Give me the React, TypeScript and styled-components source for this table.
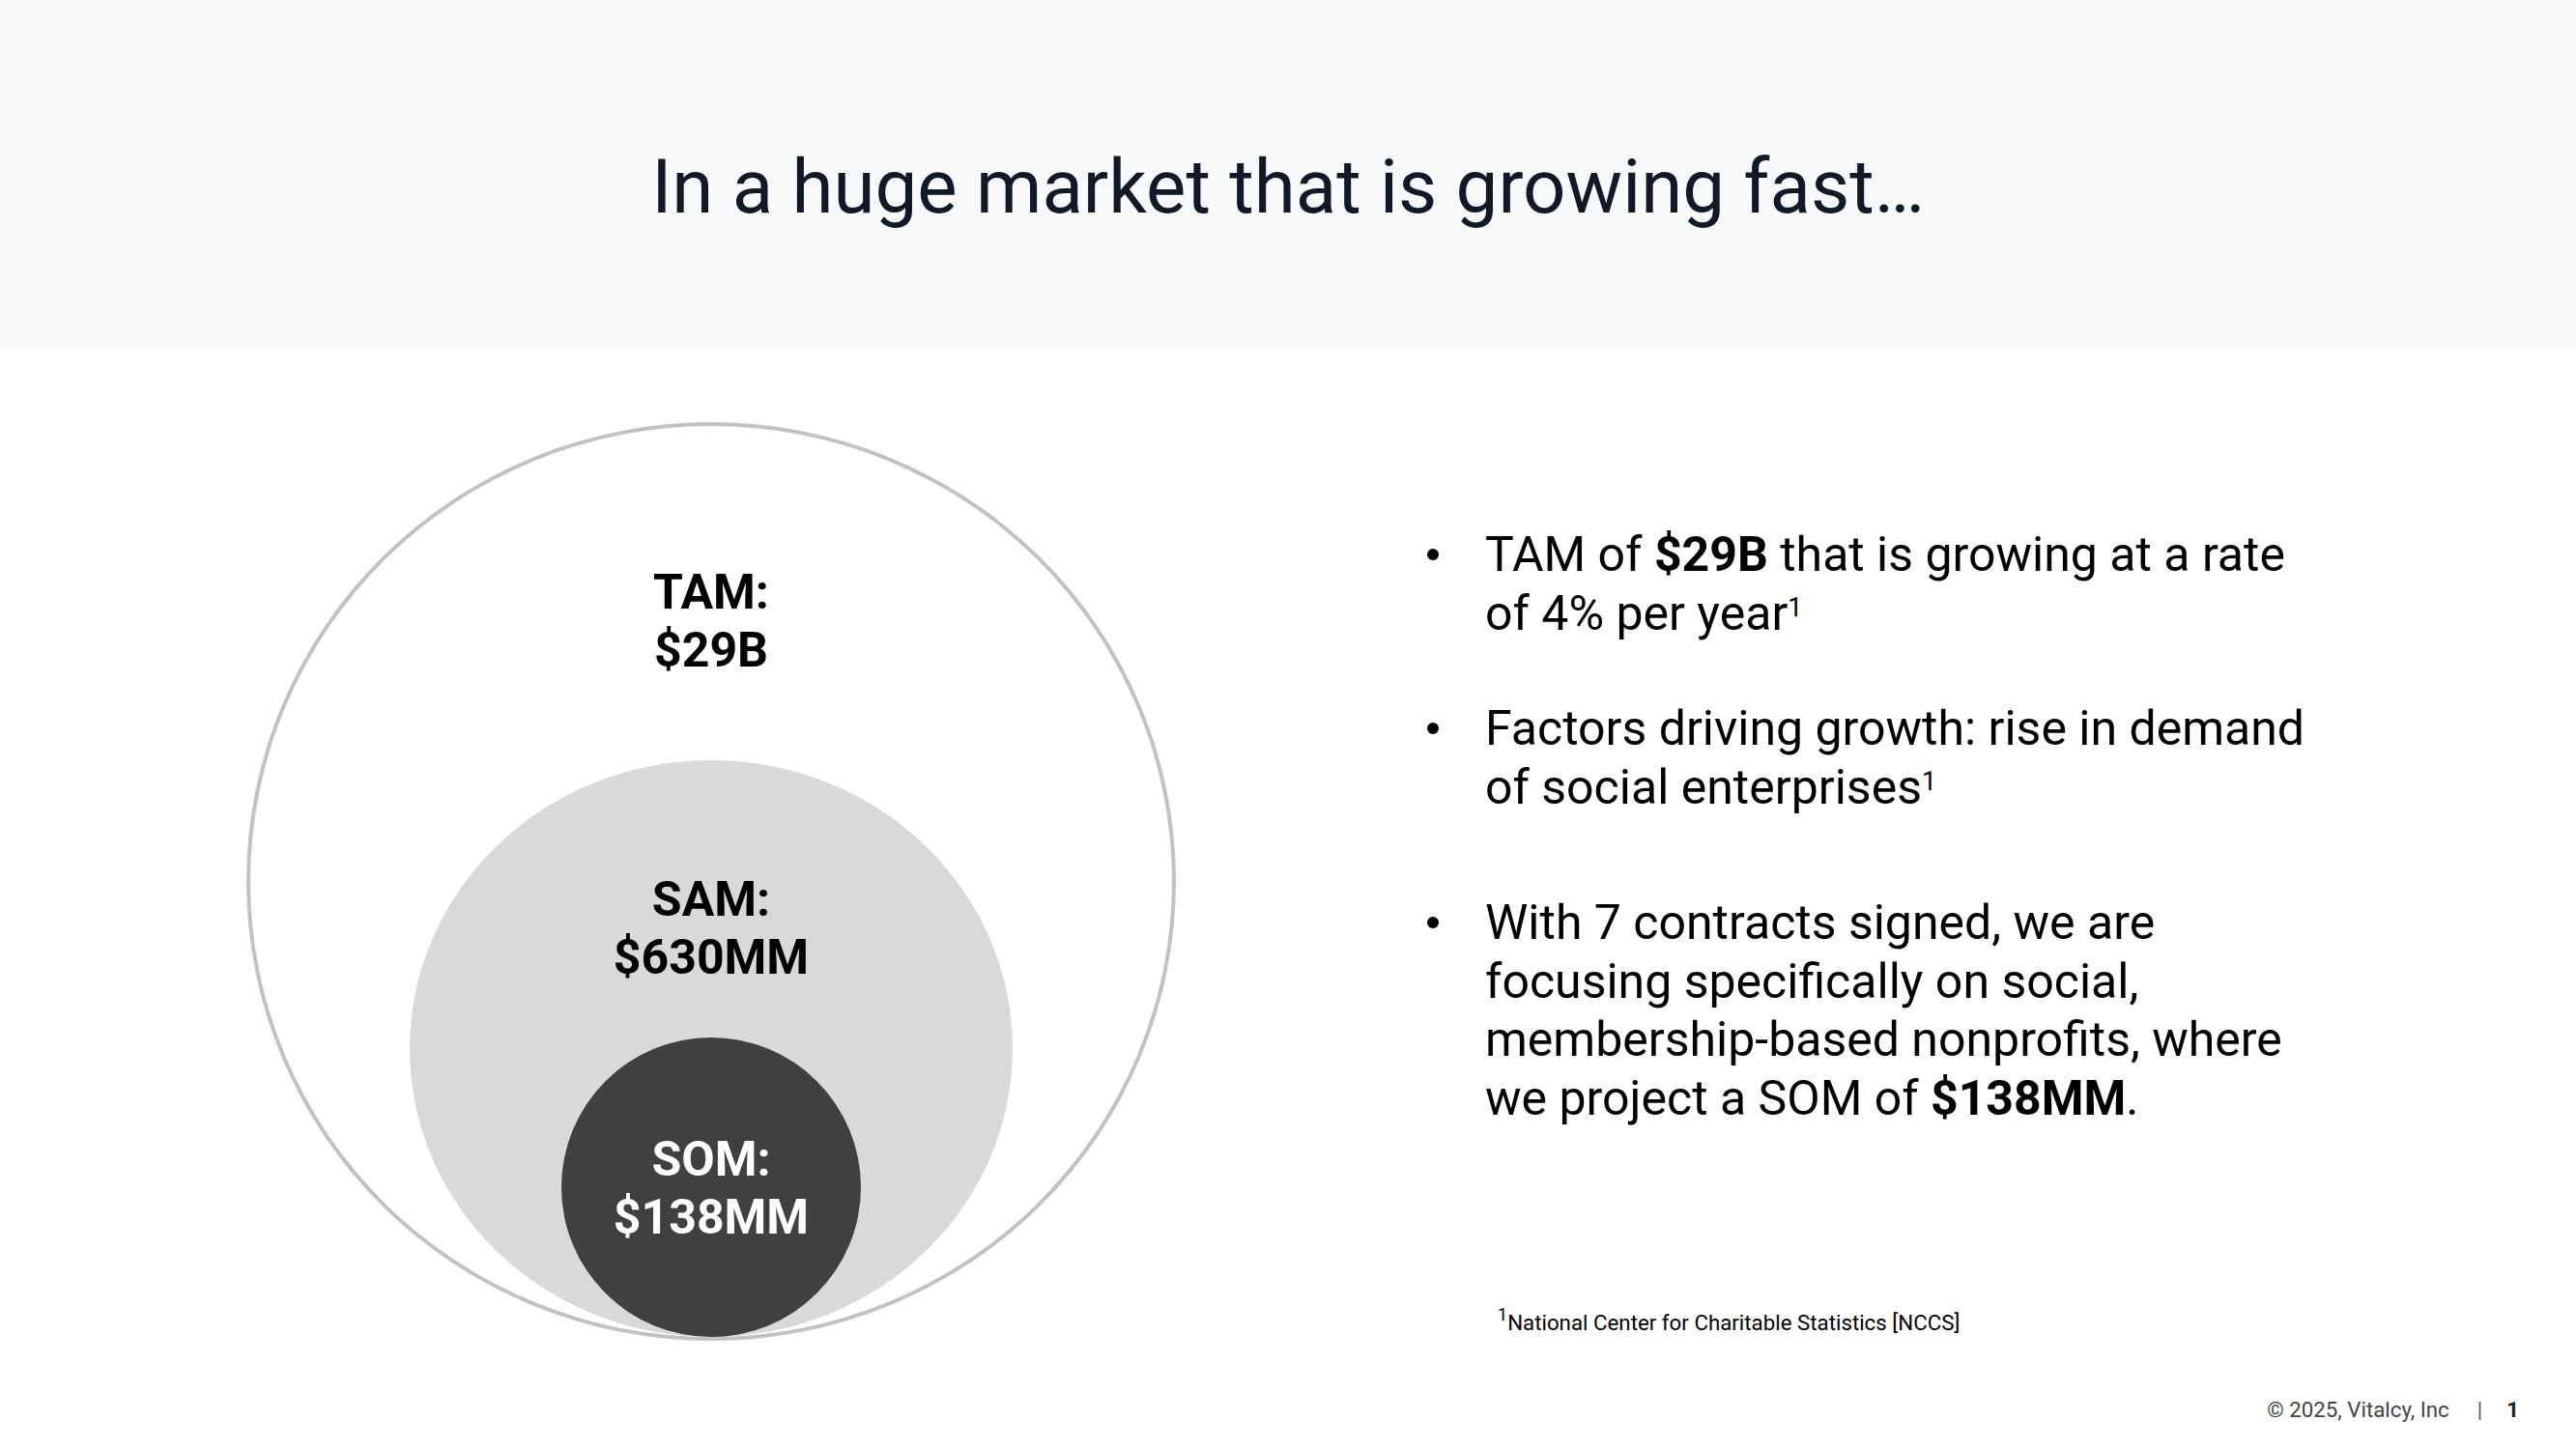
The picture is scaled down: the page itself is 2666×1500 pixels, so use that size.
import React from "react";
import styled, { createGlobalStyle } from "styled-components";

const GlobalStyle = createGlobalStyle`
  html, body { margin: 0; padding: 0; background: #ffffff; }
  body {
    font-family: Roboto, "Noto Sans", "Liberation Sans", sans-serif;
    -webkit-font-smoothing: antialiased;
  }
  * { box-sizing: border-box; }
`;

const Slide = styled.div`
  width: 2666px;
  height: 1500px;
  display: flex;
  flex-direction: column;
  background: #ffffff;
  overflow: hidden;
`;

const Header = styled.header`
  height: 362px;
  flex-shrink: 0;
  background: #f8f9fb;
  display: flex;
  justify-content: center;
  padding-top: 155px;
`;

const Title = styled.h1`
  margin: 0;
  font-size: 78px;
  line-height: 78px;
  font-weight: 400;
  color: #111827;
`;

const Body = styled.main`
  display: flex;
  align-items: flex-start;
  padding-left: 255px;
`;

const Ring = styled.div<{
  $w: number;
  $h: number;
  $fill: string;
  $pad: number;
  $stroke?: string;
  $top?: string;
}>`
  flex-shrink: 0;
  width: ${(p) => p.$w}px;
  height: ${(p) => p.$h}px;
  margin-top: ${(p) => p.$top ?? "auto"};
  border-radius: 50%;
  background: ${(p) => p.$fill};
  border: ${(p) => (p.$stroke ? `4px solid ${p.$stroke}` : "none")};
  display: flex;
  flex-direction: column;
  align-items: center;
  padding-top: ${(p) => p.$pad}px;
`;

const Label = styled.div<{ $color: string }>`
  font-size: 50px;
  line-height: 60px;
  font-weight: 700;
  text-align: center;
  white-space: nowrap;
  color: ${(p) => p.$color};
`;

const Column = styled.section`
  margin-left: 260px;
  padding-top: 182px;
  display: flex;
  flex-direction: column;
`;

const List = styled.ul`
  list-style: none;
  margin: 0;
  padding: 0;
`;

const Item = styled.li<{ $gap: number }>`
  display: grid;
  grid-template-columns: 60px 865px;
  margin-top: ${(p) => p.$gap}px;
  font-size: 50px;
  line-height: 60.5px;
  color: #000000;
`;

const Dot = styled.span`
  width: 12px;
  height: 12px;
  margin-top: 24px;
  border-radius: 50%;
  background: #000000;
`;

const Text = styled.span`
  b { font-weight: 700; }
`;

const Sup = styled.sup<{ $size: number; $rise: number }>`
  font-size: ${(p) => p.$size}px;
  line-height: 0;
  vertical-align: ${(p) => p.$rise}px;
`;

const Footnote = styled.p`
  margin: 190px 0 0 73px;
  font-size: 22.3px;
  line-height: 25px;
  color: #000000;
`;

const Footer = styled.footer`
  margin-top: auto;
  display: flex;
  justify-content: flex-end;
  align-items: baseline;
  padding: 0 59px 28px 0;
  font-size: 22.3px;
  line-height: 26px;
  color: #444444;
`;

const Divider = styled.span`
  margin: 0 25px 0 29px;
  color: #555555;
`;

const PageNumber = styled.span`
  font-weight: 700;
  color: #222222;
`;

export default function App() {
  return (
    <>
      <GlobalStyle />
      <Slide>
        <Header>
          <Title>In a huge market that is growing fast…</Title>
        </Header>
        <Body>
          <Ring $w={962} $h={951} $fill="#ffffff" $stroke="#c2c2c2" $pad={142} $top="75px">
            <Label $color="#000000">
              TAM:
              <br />
              $29B
            </Label>
            <Ring $w={624} $h={597} $fill="#d9d9d9" $pad={114}>
              <Label $color="#000000">
                SAM:
                <br />
                $630MM
              </Label>
              <Ring $w={310} $h={310} $fill="#404040" $pad={96}>
                <Label $color="#ffffff">
                  SOM:
                  <br />
                  $138MM
                </Label>
              </Ring>
            </Ring>
          </Ring>
          <Column>
            <List>
              <Item $gap={0}>
                <Dot />
                <Text>
                  TAM of <b>$29B</b> that is growing at a rate of 4% per year
                  <Sup $size={27} $rise={14}>1</Sup>
                </Text>
              </Item>
              <Item $gap={59}>
                <Dot />
                <Text>
                  Factors driving growth: rise in demand of social enterprises
                  <Sup $size={27} $rise={14}>1</Sup>
                </Text>
              </Item>
              <Item $gap={80}>
                <Dot />
                <Text>
                  With 7 contracts signed, we are focusing specifically on social,
                  membership-based nonprofits, where we project a SOM of <b>$138MM</b>.
                </Text>
              </Item>
            </List>
            <Footnote>
              <Sup $size={18} $rise={10}>1</Sup>National Center for Charitable Statistics [NCCS]
            </Footnote>
          </Column>
        </Body>
        <Footer>
          <span>© 2025, Vitalcy, Inc</span>
          <Divider>|</Divider>
          <PageNumber>1</PageNumber>
        </Footer>
      </Slide>
    </>
  );
}
